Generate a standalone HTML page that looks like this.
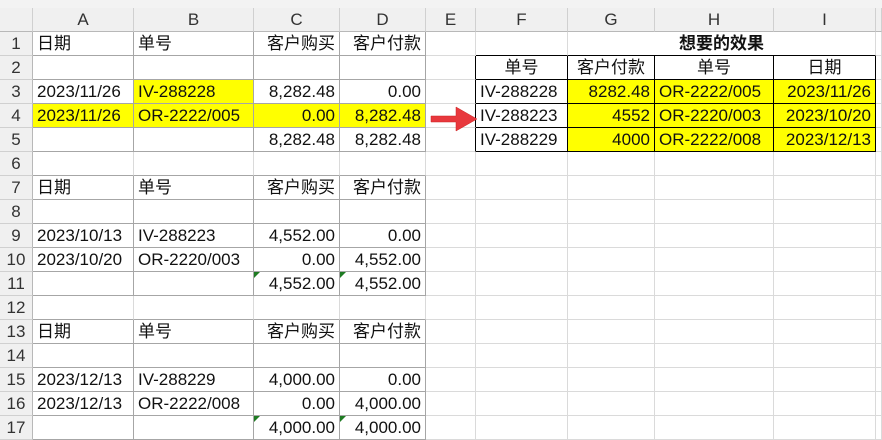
<!DOCTYPE html>
<html><head><meta charset="utf-8"><style>
body{margin:0;width:882px;height:439px;overflow:hidden;background:#fff;font-family:"Liberation Sans","Noto Sans CJK SC",sans-serif;}
.top{height:8px;background:#f3f3f3;}
table{border-collapse:separate;border-spacing:0;table-layout:fixed;width:882px;}
td{height:23px;border-right:1px solid #dadada;border-bottom:1px solid #dadada;padding:0 4px;font-size:17px;color:#111;white-space:nowrap;overflow:hidden;position:relative;line-height:23px;}
tr.h td{height:21px;background:#f0f0f0;text-align:center;color:#333;font-size:17px;border-right:1px solid #d0d0d0;border-bottom:1px solid #b8b8b8;}
td.n{background:#f0f0f0;text-align:center;color:#333;padding:0;border-right:1px solid #b8b8b8;border-bottom:1px solid #d0d0d0;}
.g{border-right-color:#a6a6a6;border-bottom-color:#a6a6a6;}
.gb{border-bottom-color:#a6a6a6;}
.k{border-right-color:#000;border-bottom-color:#000;}
.kr{border-right-color:#000;}
.kb{border-bottom-color:#000;}
.y{background:#ffff00;}
.r{text-align:right;}
.c{text-align:center;}
.t::before{content:"";position:absolute;left:0;top:0;border-top:6px solid #1e7b22;border-right:6px solid transparent;}
</style></head><body>
<div class="top"></div>
<table>
<colgroup><col style="width:33px"><col style="width:101px"><col style="width:120px"><col style="width:86px"><col style="width:86px"><col style="width:50px"><col style="width:92px"><col style="width:87px"><col style="width:119px"><col style="width:102px"><col style="width:6px"></colgroup>
<tr class="h"><td style="background:#f0f0f0"></td><td>A</td><td>B</td><td>C</td><td>D</td><td>E</td><td>F</td><td>G</td><td>H</td><td>I</td><td></td></tr>
<tr><td class="n">1</td><td class="g">日期</td><td class="g">单号</td><td class="g r">客户购买</td><td class="g r">客户付款</td><td></td><td class="kb"></td><td colspan="3" class="kb c" style="font-weight:bold">想要的效果</td><td></td></tr>
<tr><td class="n">2</td><td class="g"></td><td class="g"></td><td class="g"></td><td class="g"></td><td class="kr"></td><td class="k c">单号</td><td class="k c">客户付款</td><td class="k c">单号</td><td class="k c">日期</td><td></td></tr>
<tr><td class="n">3</td><td class="g">2023/11/26</td><td class="g y">IV-288228</td><td class="g r">8,282.48</td><td class="g r">0.00</td><td class="kr"></td><td class="k">IV-288228</td><td class="k y r">8282.48</td><td class="k y">OR-2222/005</td><td class="k y r">2023/11/26</td><td></td></tr>
<tr><td class="n">4</td><td class="g y">2023/11/26</td><td class="g y">OR-2222/005</td><td class="g y r">0.00</td><td class="g y r">8,282.48</td><td class="kr"></td><td class="k">IV-288223</td><td class="k y r">4552</td><td class="k y">OR-2220/003</td><td class="k y r">2023/10/20</td><td></td></tr>
<tr><td class="n">5</td><td class="g"></td><td class="g"></td><td class="g r">8,282.48</td><td class="g r">8,282.48</td><td class="kr"></td><td class="k">IV-288229</td><td class="k y r">4000</td><td class="k y">OR-2222/008</td><td class="k y r">2023/12/13</td><td></td></tr>
<tr><td class="n">6</td><td class="gb"></td><td class="gb"></td><td class="gb"></td><td class="gb"></td><td></td><td></td><td></td><td></td><td></td><td></td></tr>
<tr><td class="n">7</td><td class="g">日期</td><td class="g">单号</td><td class="g r">客户购买</td><td class="g r">客户付款</td><td></td><td></td><td></td><td></td><td></td><td></td></tr>
<tr><td class="n">8</td><td class="g"></td><td class="g"></td><td class="g"></td><td class="g"></td><td></td><td></td><td></td><td></td><td></td><td></td></tr>
<tr><td class="n">9</td><td class="g">2023/10/13</td><td class="g">IV-288223</td><td class="g r">4,552.00</td><td class="g r">0.00</td><td></td><td></td><td></td><td></td><td></td><td></td></tr>
<tr><td class="n">10</td><td class="g">2023/10/20</td><td class="g">OR-2220/003</td><td class="g r">0.00</td><td class="g r">4,552.00</td><td></td><td></td><td></td><td></td><td></td><td></td></tr>
<tr><td class="n">11</td><td class="g"></td><td class="g"></td><td class="g r t">4,552.00</td><td class="g r t">4,552.00</td><td></td><td></td><td></td><td></td><td></td><td></td></tr>
<tr><td class="n">12</td><td class="gb"></td><td class="gb"></td><td class="gb"></td><td class="gb"></td><td></td><td></td><td></td><td></td><td></td><td></td></tr>
<tr><td class="n">13</td><td class="g">日期</td><td class="g">单号</td><td class="g r">客户购买</td><td class="g r">客户付款</td><td></td><td></td><td></td><td></td><td></td><td></td></tr>
<tr><td class="n">14</td><td class="g"></td><td class="g"></td><td class="g"></td><td class="g"></td><td></td><td></td><td></td><td></td><td></td><td></td></tr>
<tr><td class="n">15</td><td class="g">2023/12/13</td><td class="g">IV-288229</td><td class="g r">4,000.00</td><td class="g r">0.00</td><td></td><td></td><td></td><td></td><td></td><td></td></tr>
<tr><td class="n">16</td><td class="g">2023/12/13</td><td class="g">OR-2222/008</td><td class="g r">0.00</td><td class="g r">4,000.00</td><td></td><td></td><td></td><td></td><td></td><td></td></tr>
<tr><td class="n">17</td><td class="g"></td><td class="g"></td><td class="g r t">4,000.00</td><td class="g r t">4,000.00</td><td></td><td></td><td></td><td></td><td></td><td></td></tr>
</table>
<svg style="position:absolute;left:428px;top:104px" width="52" height="30" viewBox="0 0 52 30"><path d="M3 12 H28 V3 L49 15 L28 27 V18 H3 Z" fill="#e8383d" stroke="#c22" stroke-width="0.5" stroke-linejoin="round"/></svg>
</body></html>
